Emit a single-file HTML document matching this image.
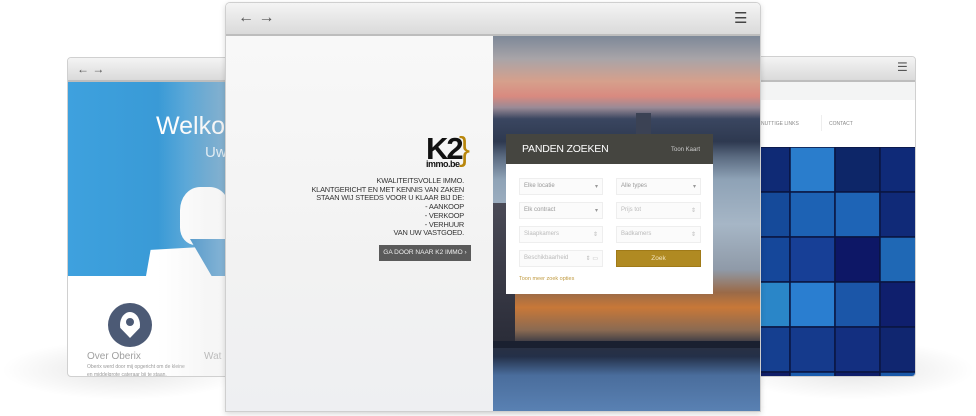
<!DOCTYPE html>
<html><head><meta charset="utf-8"><style>
*{margin:0;padding:0;box-sizing:border-box}
body{width:976px;height:416px;background:#fff;position:relative;overflow:hidden;font-family:"Liberation Sans",sans-serif}
.abs{position:absolute}
.bar{background:linear-gradient(#f4f4f4,#dadada);border-bottom:2px solid #bdbdbd}
.shadow{position:absolute;background:radial-gradient(ellipse at center,rgba(0,0,0,.10),rgba(0,0,0,0) 70%)}
</style></head><body>
<div class="shadow" style="left:0;width:250px;top:340px;height:60px"></div>
<div class="shadow" style="left:730px;width:246px;top:340px;height:60px"></div>
<div class="shadow" style="left:215px;width:560px;top:398px;height:18px"></div>

<!-- left browser -->
<div class="abs" style="left:67px;top:57px;width:170px;height:320px;border-radius:4px;overflow:hidden;background:#fff;border:1px solid #d0d0d0">
 <div class="bar abs" style="left:0;top:0;width:170px;height:24px"><span class="abs" style="left:9px;top:4px;color:#555;font-size:12px;font-weight:bold">← →</span></div>
 <div class="abs" style="left:0;top:24px;width:170px;height:194px;background:linear-gradient(90deg,#3ea1de,#3898d4 70%,#2a78b0)">
  <div class="abs" style="left:88px;top:30px;color:#fff;font-size:25px;font-weight:300;white-space:nowrap">Welkom</div>
  <div class="abs" style="left:137px;top:62px;color:#dbeefa;font-size:15px">Uw</div>
  <div class="abs" style="left:112px;top:105px;width:50px;height:58px;background:#fff;border-radius:40% 40% 30% 30%"></div>
  <div class="abs" style="left:78px;top:165px;width:92px;height:29px;background:#fff;clip-path:polygon(5% 10%,60% 0,100% 0,100% 100%,0 100%)"></div>
  <div class="abs" style="left:122px;top:157px;width:48px;height:37px;background:#2f86c4;clip-path:polygon(0 0,100% 0,100% 100%,45% 100%)"></div>
 </div>
 <div class="abs" style="left:40px;top:245px;width:44px;height:44px;border-radius:50%;background:#4c5a75"></div>
 <div class="abs" style="left:52px;top:254px;width:20px;height:26px;background:#fff;border-radius:50%;clip-path:polygon(0 0,100% 0,100% 60%,50% 100%,0 60%)"></div>
 <div class="abs" style="left:58px;top:260px;width:8px;height:8px;border-radius:50%;background:#4c5a75"></div>
 <div class="abs" style="left:19px;top:293px;color:#a0a0a0;font-size:10px">Over Oberix</div>
 <div class="abs" style="left:19px;top:305px;color:#999;font-size:5px;line-height:8px;width:100px">Oberix werd door mij opgericht om de kleine en middelgrote cateraar bij te staan.</div>
 <div class="abs" style="left:136px;top:293px;color:#a0a0a0;font-size:10px">Wat</div>
 <div class="abs" style="left:90px;top:24px;width:80px;height:296px;background:linear-gradient(90deg,rgba(255,255,255,0),rgba(230,230,230,.35) 60%,rgba(235,235,235,.55))"></div>
</div>

<!-- right browser -->
<div class="abs" style="left:740px;top:56px;width:176px;height:321px;border-radius:4px;overflow:hidden;background:#fff;border:1px solid #d0d0d0">
 <div class="bar abs" style="left:0;top:0;width:176px;height:25px"><span class="abs" style="left:156px;top:3px;color:#555;font-size:12px">☰</span></div>
 <div class="abs" style="left:0;top:25px;width:176px;height:18px;background:#f3f4f4"></div>
 <div class="abs" style="left:20px;top:64px;color:#888;font-size:5px">NUTTIGE LINKS</div>
 <div class="abs" style="left:80px;top:58px;width:1px;height:16px;background:#eee"></div>
 <div class="abs" style="left:88px;top:64px;color:#888;font-size:5px">CONTACT</div>
 <svg class="abs" style="left:0;top:90px" width="176" height="231">
  <g stroke="#0a1540" stroke-width="1.5">
  <rect x="-6" y="0" width="55" height="45" fill="#0f2a75"/><rect x="49" y="0" width="45" height="45" fill="#2a7dcc"/><rect x="94" y="0" width="45" height="45" fill="#0d2668"/><rect x="139" y="0" width="45" height="45" fill="#0f2a78"/>
  <rect x="-6" y="45" width="55" height="45" fill="#154a9a"/><rect x="49" y="45" width="45" height="45" fill="#1d62b4"/><rect x="94" y="45" width="45" height="45" fill="#1e64b6"/><rect x="139" y="45" width="45" height="45" fill="#102a78"/>
  <rect x="-6" y="90" width="55" height="45" fill="#15479a"/><rect x="49" y="90" width="45" height="45" fill="#173f96"/><rect x="94" y="90" width="45" height="45" fill="#0d1766"/><rect x="139" y="90" width="45" height="45" fill="#1f68b5"/>
  <rect x="-6" y="135" width="55" height="45" fill="#2a86c8"/><rect x="49" y="135" width="45" height="45" fill="#2a7ed0"/><rect x="94" y="135" width="45" height="45" fill="#1b56a8"/><rect x="139" y="135" width="45" height="45" fill="#0f1f6d"/>
  <rect x="-6" y="180" width="55" height="45" fill="#153f90"/><rect x="49" y="180" width="45" height="45" fill="#153a8c"/><rect x="94" y="180" width="45" height="45" fill="#132f80"/><rect x="139" y="180" width="45" height="45" fill="#102670"/>
  <rect x="-6" y="225" width="55" height="45" fill="#101e68"/><rect x="49" y="225" width="45" height="45" fill="#1b5cae"/><rect x="94" y="225" width="45" height="45" fill="#0e1e6a"/><rect x="139" y="225" width="45" height="45" fill="#1a58a8"/>
  </g></svg>
</div>

<!-- middle browser -->
<div class="abs" style="left:225px;top:2px;width:536px;height:410px;border-radius:5px 5px 0 0;overflow:hidden;border:1px solid #cfcfcf;background:#fff;box-shadow:0 2px 6px rgba(0,0,0,.15)">
 <div class="bar abs" style="left:0;top:0;width:536px;height:33px"><span class="abs" style="left:12px;top:6px;color:#555;font-size:16px;font-weight:bold">← →</span><span class="abs" style="left:508px;top:6px;color:#444;font-size:15px">☰</span></div>
 <div class="abs" style="left:0;top:33px;width:267px;height:377px;background:linear-gradient(#f8f8f8,#f2f2f2 60%,#eeeff2)"></div>
 <div class="abs" style="left:200px;top:132px;font-size:31px;font-weight:bold;letter-spacing:-2px;color:#111;line-height:28px">K2</div>
 <div class="abs" style="left:200px;top:156px;font-size:9px;font-weight:bold;color:#111;letter-spacing:-.5px">immo.be</div>
 <div class="abs" style="left:233px;top:129px;font-size:33px;color:#b8860b;line-height:34px">}</div>
 <div class="abs" style="left:40px;top:174px;width:198px;text-align:right;font-size:7.4px;line-height:8.7px;color:#333;letter-spacing:-.2px">KWALITEITSVOLLE IMMO.<br>KLANTGERICHT EN MET KENNIS VAN ZAKEN<br>STAAN WIJ STEEDS VOOR U KLAAR BIJ DE:<br>- AANKOOP<br>- VERKOOP<br>- VERHUUR<br>VAN UW VASTGOED.</div>
 <div class="abs" style="left:153px;top:242px;width:92px;height:16px;background:#5a5a5a;color:#eee;font-size:6.5px;line-height:16px;text-align:center">GA DOOR NAAR K2 IMMO ›</div>
 <!-- photo -->
 <div class="abs" style="left:267px;top:33px;width:269px;height:377px;background:linear-gradient(#7d8898 0%,#a8a4a8 6%,#d6a08c 12%,#d88a80 16%,#9a8a96 19%,#3a4660 22%,#2e3950 28%,#5a6a80 32%,#8ea2b6 38%,#a6b6c6 50%,#8f9aa8 62%,#9a6a48 68%,#c87838 72%,#8a6a52 78%,#2a3142 82%,#243048 85%,#4a6d9c 90%,#5a82b4 100%)"></div>
 <div class="abs" style="left:410px;top:110px;width:15px;height:28px;background:#3b4254"></div>
 <div class="abs" style="left:267px;top:200px;width:22px;height:140px;background:linear-gradient(#4a4a56,#2a2c38)"></div>
 <div class="abs" style="left:267px;top:338px;width:269px;height:7px;background:#1a2030"></div>
 <!-- search box -->
 <div class="abs" style="left:280px;top:131px;width:207px;height:30px;background:#454540"></div>
 <div class="abs" style="left:296px;top:140px;color:#fff;font-size:10.5px;letter-spacing:-.2px">PANDEN ZOEKEN</div>
 <div class="abs" style="left:445px;top:144px;color:#ccc;font-size:6px">Toon Kaart</div>
 <div class="abs" style="left:280px;top:161px;width:207px;height:130px;background:#fff"></div>
 <div class="abs" style="left:293px;top:175px;width:84px;height:17px;background:#fbfbfb;border:1px solid #eee;font-size:6px;color:#999;padding:4px">Elke locatie<span style="float:right">▾</span></div>
 <div class="abs" style="left:390px;top:175px;width:85px;height:17px;background:#fbfbfb;border:1px solid #eee;font-size:6px;color:#999;padding:4px">Alle types<span style="float:right">▾</span></div>
 <div class="abs" style="left:293px;top:199px;width:84px;height:17px;background:#fbfbfb;border:1px solid #eee;font-size:6px;color:#999;padding:4px">Elk contract<span style="float:right">▾</span></div>
 <div class="abs" style="left:390px;top:199px;width:85px;height:17px;background:#fbfbfb;border:1px solid #eee;font-size:6px;color:#bbb;padding:4px">Prijs tot<span style="float:right">⇕</span></div>
 <div class="abs" style="left:293px;top:223px;width:84px;height:17px;background:#fbfbfb;border:1px solid #eee;font-size:6px;color:#bbb;padding:4px">Slaapkamers<span style="float:right">⇕</span></div>
 <div class="abs" style="left:390px;top:223px;width:85px;height:17px;background:#fbfbfb;border:1px solid #eee;font-size:6px;color:#bbb;padding:4px">Badkamers<span style="float:right">⇕</span></div>
 <div class="abs" style="left:293px;top:247px;width:84px;height:17px;background:#fbfbfb;border:1px solid #eee;font-size:6px;color:#bbb;padding:4px">Beschikbaarheid<span style="float:right">⇕ ▭</span></div>
 <div class="abs" style="left:390px;top:247px;width:85px;height:17px;background:#b08a22;border:1px solid #a07a18;font-size:6.5px;color:#f5e6c0;text-align:center;line-height:15px">Zoek</div>
 <div class="abs" style="left:293px;top:273px;font-size:5.5px;color:#c09a40">Toon meer zoek opties</div>
</div>
</body></html>
